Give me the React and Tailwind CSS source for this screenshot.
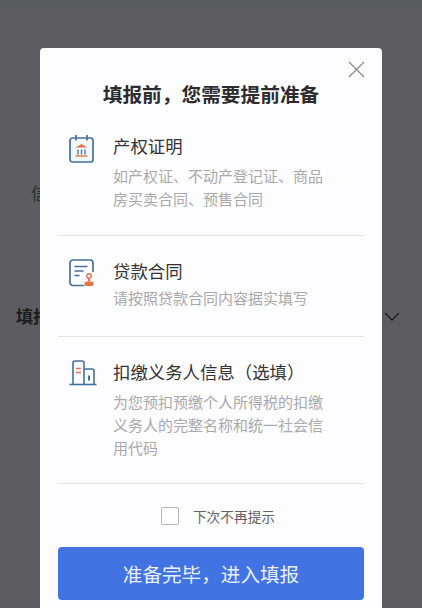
const font = { fontFamily: '"Noto Sans CJK SC", "Noto Sans", sans-serif' }

function DeedIcon() {
    return (
        <svg width="26" height="30" viewBox="0 0 26 30" fill="none">
            <rect x="1" y="4" width="23" height="24" rx="2.500" stroke="#44709f" strokeWidth="1.700" fill="#f1f7fc" />
            <path d="M7 1v5.500M18 1v5.500" stroke="#44709f" strokeWidth="1.700" />
            <path d="M6.500 13.500l6-3.500 6 3.500z" fill="#e0764a" />
            <path d="M9 15.500v5M12.500 15.500v5M16 15.500v5" stroke="#44709f" strokeWidth="1.300" />
            <path d="M6.500 22h12" stroke="#e0764a" strokeWidth="1.400" />
        </svg>
    )
}

function ContractIcon() {
    return (
        <svg width="26" height="28" viewBox="0 0 26 28" fill="none">
            <path d="M15 26.500H4a3 3 0 0 1-3-3V4a3 3 0 0 1 3-3h17a3 3 0 0 1 3 3v9" stroke="#44709f" strokeWidth="1.700" />
            <path d="M5.500 7.500h13M5.500 12h9M5.500 16.500h5" stroke="#44709f" strokeWidth="1.600" />
            <circle cx="20" cy="17" r="2.300" stroke="#e0764a" strokeWidth="1.400" />
            <path d="M20 19.500v3" stroke="#e0764a" strokeWidth="2" />
            <rect x="15.500" y="22.500" width="9" height="4.500" rx="1.500" fill="#e0764a" />
        </svg>
    )
}

function BuildingIcon() {
    return (
        <svg width="28" height="26" viewBox="0 0 28 26" fill="none">
            <path d="M4 24V3a2 2 0 0 1 2-2h7a2 2 0 0 1 2 2v21" stroke="#44709f" strokeWidth="1.600" />
            <path d="M15 9h8a2 2 0 0 1 2 2v13" stroke="#44709f" strokeWidth="1.600" />
            <path d="M7 8.500h5M7 12.500h5" stroke="#e0764a" strokeWidth="1.500" />
            <path d="M20 15.500v5" stroke="#44709f" strokeWidth="2" />
            <path d="M0.500 24.500h27" stroke="#44709f" strokeWidth="1.600" />
        </svg>
    )
}

function Item({ icon, title, desc, className, descClass }) {
    return (
        <div className={`flex border-b border-[#e4e4e6] ${className}`}>
            <div className="w-[55px] shrink-0 pl-[11px]">{icon}</div>
            <div>
                <div className="text-[17.400px] leading-[24px] text-[#333336]">{title}</div>
                <div className={`w-[215px] text-[15px] leading-[23px] text-[#a9a9ad] ${descClass}`}>{desc}</div>
            </div>
        </div>
    )
}

function App() {
    return (
        <div className="relative h-[608px] w-[422px] overflow-hidden bg-[#5d5c60] pt-[48px] pl-[40px]" style={font}>
            {/* page behind the overlay */}
            <div className="absolute inset-x-0 top-0 h-[8px] bg-[#595b5c]" />
            <div className="absolute left-[31px] top-[183px] text-[17px] leading-[20px] text-[#2a2a2c]">信</div>
            <div className="absolute left-[16px] top-[306px] text-[17px] leading-[20px] font-bold text-[#1c1c1e]">填报</div>
            <svg className="absolute left-[384px] top-[312px]" width="16" height="10" viewBox="0 0 16 10" fill="none">
                <path d="M1 1l7 7 7-7" stroke="#1c1c1e" strokeWidth="1.300" />
            </svg>

            <div className="relative h-[570px] w-[342px] rounded-[4px] bg-[#fdfcfe] px-[18px]">
                <svg className="absolute right-[17px] top-[13px]" width="17" height="17" viewBox="0 0 17 17" fill="none">
                    <path d="M1 1l15 15M16 1L1 16" stroke="#8b8b8d" strokeWidth="1.300" />
                </svg>

                <div className="pt-[32px] text-center text-[19.700px] leading-[28px] font-bold text-[#2c2c2e]">填报前，您需要提前准备</div>

                <Item
                    className="mt-[26px] h-[102px]"
                    icon={<DeedIcon />}
                    title="产权证明"
                    desc="如产权证、不动产登记证、商品房买卖合同、预售合同"
                    descClass="mt-[6px]"
                />
                <Item
                    className="h-[101px] pt-[23px]"
                    icon={<ContractIcon />}
                    title="贷款合同"
                    desc="请按照贷款合同内容据实填写"
                    descClass="mt-[3px]"
                />
                <Item
                    className="h-[147px] pt-[23px]"
                    icon={<BuildingIcon />}
                    title="扣缴义务人信息（选填）"
                    desc="为您预扣预缴个人所得税的扣缴义务人的完整名称和统一社会信用代码"
                    descClass="mt-[6px]"
                />

                <div className="flex h-[63px] items-center justify-center pl-[14px]">
                    <div className="h-[18px] w-[18px] rounded-[2px] border border-[#b9b9bb] bg-white" />
                    <div className="ml-[14px] text-[13.700px] leading-[20px] text-[#626265]">下次不再提示</div>
                </div>

                <button className="h-[53px] w-full rounded-[4px] bg-[#4273e3] text-[19.600px] text-[#e9f0fc]">准备完毕，进入填报</button>
            </div>
        </div>
    )
}

export default App
